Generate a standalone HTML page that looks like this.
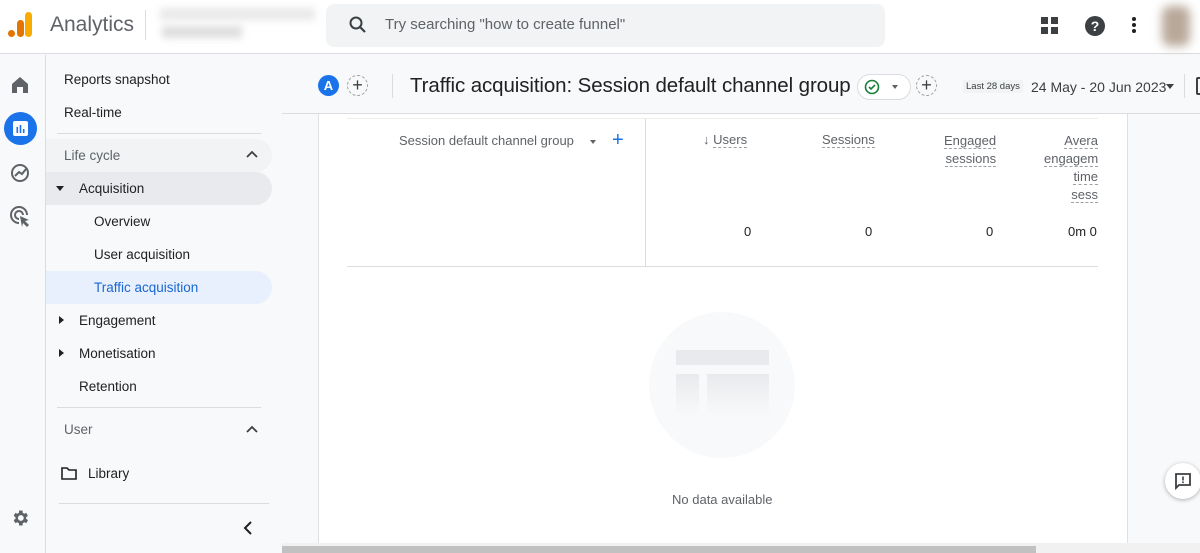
<!DOCTYPE html>
<html><head><meta charset="utf-8"><style>
*{box-sizing:border-box;margin:0;padding:0}
body{width:1200px;height:553px;overflow:hidden;background:#f8f9fa;font-family:"Liberation Sans",Arial,sans-serif;color:#202124;position:relative}
.a{position:absolute}
.t{font-size:13.5px;color:#202124;white-space:nowrap}
.g{color:#5f6368}
.dot{border-bottom:1px dashed #9aa0a6}
</style></head><body>
<!-- top bar -->
<div class="a" style="left:0;top:0;width:1200px;height:54px;background:#fff;border-bottom:1px solid #dadce0"></div>
<div class="a" style="left:8px;top:30px;width:7px;height:7px;border-radius:50%;background:#e37400"></div>
<div class="a" style="left:17px;top:20px;width:7px;height:17px;border-radius:3.5px;background:#e37400"></div>
<div class="a" style="left:25px;top:12px;width:7px;height:25px;border-radius:3.5px;background:#f9ab00"></div>
<div class="a" style="left:50px;top:13px;font-size:21px;color:#5f6368">Analytics</div>
<div class="a" style="left:145px;top:10px;width:1px;height:30px;background:#dadce0"></div>
<div class="a" style="left:160px;top:8px;width:155px;height:12px;background:#e8e8e8;filter:blur(4px)"></div>
<div class="a" style="left:162px;top:26px;width:80px;height:12px;background:#ddd;filter:blur(4px)"></div>
<div class="a" style="left:326px;top:4px;width:559px;height:43px;background:#f1f3f4;border-radius:8px"></div>
<svg class="a" style="left:348px;top:15px" width="20" height="20" viewBox="0 0 20 20"><circle cx="8" cy="8" r="5.5" fill="none" stroke="#3c4043" stroke-width="2"/><path d="M12 12l5 5" stroke="#3c4043" stroke-width="2.2"/></svg>
<div class="a" style="left:385px;top:16px;font-size:15px;color:#5f6368">Try searching "how to create funnel"</div>
<svg class="a" style="left:1041px;top:17px" width="18" height="18"><rect x="0" y="0" width="7" height="7" fill="#3c4043"/><rect x="10" y="0" width="7" height="7" fill="#3c4043"/><rect x="0" y="10" width="7" height="7" fill="#3c4043"/><rect x="10" y="10" width="7" height="7" fill="#3c4043"/></svg>
<div class="a" style="left:1085px;top:16px;width:20px;height:20px;border-radius:50%;background:#3c4043;color:#fff;font-size:14px;font-weight:bold;text-align:center;line-height:20px">?</div>
<div class="a" style="left:1132px;top:17px;width:4px;height:4px;border-radius:50%;background:#202124;box-shadow:0 6px 0 #202124,0 12px 0 #202124"></div>
<div class="a" style="left:1162px;top:6px;width:28px;height:40px;background:#b8a89a;filter:blur(5px);border-radius:8px"></div>
<!-- left rail -->
<div class="a" style="left:45px;top:55px;width:1px;height:498px;background:#dadce0"></div>
<svg class="a" style="left:10px;top:75px" width="20" height="20" viewBox="0 0 20 20"><path d="M2 9L10 2l8 7v9h-5v-6H7v6H2z" fill="#5f6368"/></svg>
<div class="a" style="left:4px;top:112px;width:33px;height:33px;border-radius:50%;background:#1a73e8"></div>
<svg class="a" style="left:12px;top:120px" width="17" height="17"><rect x="1" y="1" width="15" height="15" rx="2" fill="#fff"/><rect x="4.5" y="7" width="1.6" height="6" fill="#1a73e8"/><rect x="7.7" y="5" width="1.6" height="8" fill="#1a73e8"/><rect x="10.9" y="9" width="1.6" height="4" fill="#1a73e8"/></svg>
<svg class="a" style="left:10px;top:163px" width="20" height="20" viewBox="0 0 20 20"><circle cx="10" cy="10" r="8" fill="none" stroke="#5f6368" stroke-width="2"/><path d="M5 13l4-4 3 2 4-5" fill="none" stroke="#5f6368" stroke-width="2"/></svg>
<svg class="a" style="left:10px;top:206px" width="22" height="22" viewBox="0 0 22 22"><path d="M9 17a8 8 0 1 1 8-8" fill="none" stroke="#5f6368" stroke-width="2"/><path d="M9 13a4 4 0 1 1 4-4" fill="none" stroke="#5f6368" stroke-width="2"/><path d="M10 10l9 4-4 1 4 4-2 2-4-4-1 4z" fill="#5f6368"/></svg>
<svg class="a" style="left:10px;top:508px" width="20" height="20" viewBox="0 0 24 24"><path fill="#5f6368" d="M19.4 13a7.5 7.5 0 0 0 0-2l2.1-1.6-2-3.5-2.5 1a7 7 0 0 0-1.7-1L15 3h-4l-.4 2.9a7 7 0 0 0-1.7 1l-2.5-1-2 3.5L6.6 11a7.5 7.5 0 0 0 0 2l-2.2 1.6 2 3.5 2.5-1a7 7 0 0 0 1.700 1L11 21h4l.4-2.9a7 7 0 0 0 1.7-1l2.5 1 2-3.5zM13 15.5a3.5 3.5 0 1 1 0-7 3.5 3.5 0 0 1 0 7z"/></svg>
<!-- nav -->
<div class="a t" style="left:64px;top:72px">Reports snapshot</div>
<div class="a t" style="left:64px;top:105px">Real-time</div>
<div class="a" style="left:57px;top:133px;width:204px;height:1px;background:#dadce0"></div>
<div class="a" style="left:46px;top:139px;width:226px;height:33px;border-radius:0 17px 17px 0;background:#f1f3f4"></div>
<div class="a t g" style="left:64px;top:148px">Life cycle</div>
<svg class="a" style="left:246px;top:150px" width="12" height="8"><path d="M1 7l5-5 5 5" fill="none" stroke="#3c4043" stroke-width="1.8"/></svg>
<div class="a" style="left:46px;top:172px;width:226px;height:33px;border-radius:0 17px 17px 0;background:#e8eaed"></div>
<div class="a" style="left:56px;top:186px;border:4px solid transparent;border-top:5px solid #202124"></div>
<div class="a t" style="left:79px;top:181px">Acquisition</div>
<div class="a t" style="left:94px;top:214px">Overview</div>
<div class="a t" style="left:94px;top:247px">User acquisition</div>
<div class="a" style="left:46px;top:271px;width:226px;height:33px;border-radius:0 17px 17px 0;background:#e8f0fe"></div>
<div class="a t" style="left:94px;top:280px;color:#1967d2">Traffic acquisition</div>
<div class="a" style="left:59px;top:316px;border:4px solid transparent;border-left:5px solid #202124"></div>
<div class="a t" style="left:79px;top:313px">Engagement</div>
<div class="a" style="left:59px;top:349px;border:4px solid transparent;border-left:5px solid #202124"></div>
<div class="a t" style="left:79px;top:346px">Monetisation</div>
<div class="a t" style="left:79px;top:379px">Retention</div>
<div class="a" style="left:57px;top:407px;width:204px;height:1px;background:#dadce0"></div>
<div class="a t g" style="left:64px;top:422px">User</div>
<svg class="a" style="left:246px;top:425px" width="12" height="8"><path d="M1 7l5-5 5 5" fill="none" stroke="#3c4043" stroke-width="1.8"/></svg>
<svg class="a" style="left:61px;top:467px" width="16" height="13"><path d="M1 1h5l2 2h7v9H1z" fill="none" stroke="#202124" stroke-width="1.6"/></svg>
<div class="a t" style="left:88px;top:466px">Library</div>
<div class="a" style="left:59px;top:503px;width:210px;height:1px;background:#dadce0"></div>
<svg class="a" style="left:243px;top:521px" width="10" height="14"><path d="M8 1L2 7l6 6" fill="none" stroke="#202124" stroke-width="2"/></svg>
<!-- header row -->
<div class="a" style="left:282px;top:113px;width:918px;height:1px;background:#dadce0"></div>
<div class="a" style="left:318px;top:75px;width:21px;height:21px;border-radius:50%;background:#1a73e8;color:#fff;font-size:13px;font-weight:bold;text-align:center;line-height:21px">A</div>
<div class="a" style="left:347px;top:75px;width:21px;height:21px;border-radius:50%;border:1px dashed #9aa0a6;text-align:center;line-height:18px;font-size:18px;color:#3c4043">+</div>
<div class="a" style="left:392px;top:74px;width:1px;height:24px;background:#dadce0"></div>
<div class="a" style="left:410px;top:74px;font-size:20.5px;color:#202124;white-space:nowrap;letter-spacing:-0.1px">Traffic acquisition: Session default channel group</div>
<div class="a" style="left:857px;top:74px;width:54px;height:26px;border-radius:13px;border:1px solid #dadce0;background:#fff"></div>
<svg class="a" style="left:864px;top:79px" width="16" height="16"><circle cx="8" cy="8" r="6.5" fill="none" stroke="#188038" stroke-width="1.6"/><path d="M5 8l2 2 4-4" fill="none" stroke="#188038" stroke-width="1.6"/></svg>
<div class="a" style="left:892px;top:85px;border:3.5px solid transparent;border-top:4px solid #5f6368"></div>
<div class="a" style="left:916px;top:75px;width:21px;height:21px;border-radius:50%;border:1px dashed #9aa0a6;text-align:center;line-height:18px;font-size:18px;color:#3c4043">+</div>
<div class="a" style="left:963px;top:80px;padding:1px 3px;background:#f1f3f4;font-size:9.5px;color:#3c4043">Last 28 days</div>
<div class="a" style="left:1031px;top:79px;width:132px;font-size:14px;color:#3c4043;white-space:nowrap">24 May - 20 Jun 2023</div>
<div class="a" style="left:1166px;top:84px;border:4px solid transparent;border-top:5px solid #3c4043"></div>
<div class="a" style="left:1184px;top:74px;width:1px;height:24px;background:#dadce0"></div>
<div class="a" style="left:1196px;top:77px;width:8px;height:18px;border:2px solid #3c4043;border-radius:2px"></div>
<!-- card -->
<div class="a" style="left:318px;top:114px;width:810px;height:429px;background:#fff;border-left:1px solid #e0e0e0;border-right:1px solid #e0e0e0"></div>
<div class="a" style="left:347px;top:118px;width:751px;height:1px;background:#eee"></div>
<div class="a" style="left:645px;top:119px;width:1px;height:148px;background:#dadce0"></div>
<div class="a" style="left:347px;top:266px;width:751px;height:1px;background:#dadce0"></div>
<div class="a" style="left:399px;top:133px;font-size:13px;color:#5f6368;white-space:nowrap">Session default channel group</div>
<div class="a" style="left:590px;top:140px;border:3.5px solid transparent;border-top:4px solid #5f6368"></div>
<div class="a" style="left:612px;top:129px;font-size:20px;color:#1a73e8">+</div>
<div class="a" style="left:703px;top:132px;font-size:13px;color:#5f6368">↓ <span class="dot">Users</span></div>
<div class="a dot" style="left:822px;top:132px;font-size:13px;color:#5f6368">Sessions</div>
<div class="a" style="left:944px;top:132px;font-size:13px;color:#5f6368;line-height:18px;text-align:right"><span class="dot">Engaged</span><br><span class="dot">sessions</span></div>
<div class="a" style="left:1044px;top:132px;width:54px;overflow:hidden;font-size:13px;color:#5f6368;line-height:18px;text-align:right;white-space:nowrap"><span class="dot">Avera</span><br><span class="dot">engagem</span><br><span class="dot">time</span><br><span class="dot">sess</span></div>
<div class="a" style="left:744px;top:224px;font-size:13px">0</div>
<div class="a" style="left:865px;top:224px;font-size:13px">0</div>
<div class="a" style="left:986px;top:224px;font-size:13px">0</div>
<div class="a" style="left:1068px;top:224px;width:30px;overflow:hidden;font-size:13px;white-space:nowrap">0m 0</div>
<!-- empty state -->
<div class="a" style="left:649px;top:312px;width:146px;height:146px;border-radius:50%;background:#f8f9fa"></div>
<div class="a" style="left:676px;top:350px;width:93px;height:15px;background:#e8eaed"></div>
<div class="a" style="left:676px;top:374px;width:23px;height:42px;background:linear-gradient(#e8eaed,#f8f9fa)"></div>
<div class="a" style="left:707px;top:374px;width:62px;height:42px;background:linear-gradient(#e8eaed,#f8f9fa)"></div>
<div class="a" style="left:672px;top:492px;font-size:13px;color:#5f6368">No data available</div>
<!-- feedback -->
<div class="a" style="left:1165px;top:463px;width:36px;height:36px;border-radius:50%;background:#fff;box-shadow:0 1px 4px rgba(0,0,0,.3)"></div>
<svg class="a" style="left:1174px;top:472px" width="18" height="18" viewBox="0 0 18 18"><path d="M2 2h14v11H5l-3 3z" fill="none" stroke="#3c4043" stroke-width="1.8"/><rect x="8.2" y="4.5" width="1.6" height="4" fill="#3c4043"/><rect x="8.2" y="9.5" width="1.6" height="1.6" fill="#3c4043"/></svg>
<!-- scrollbar -->
<div class="a" style="left:282px;top:543px;width:918px;height:10px;background:#f1f1f1"></div>
<div class="a" style="left:282px;top:546px;width:754px;height:7px;background:#c1c1c1"></div>
</body></html>
